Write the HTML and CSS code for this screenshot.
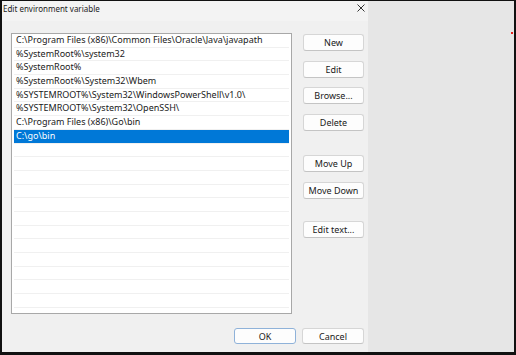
FILE: index.html
```html
<!DOCTYPE html>
<html lang="en">
<head>
    <meta charset="UTF-8">
    <title>Edit environment variable</title>
    <link rel="stylesheet" href="styles.css">
</head>
<body>
    <div class="screen">
        <div class="dialog">
            <div class="titlebar">
                <span class="title">Edit environment variable</span>
                <svg class="close" width="8" height="8" viewBox="0 0 8 8">
                    <path d="M0.5 0.5 L7.5 7.5 M7.5 0.5 L0.5 7.5" stroke="#333" stroke-width="1" fill="none"/>
                </svg>
            </div>

            <div class="body">
                <div class="list">
                    <div class="row">C:\Program Files (x86)\Common Files\Oracle\Java\javapath</div>
                    <div class="row">%SystemRoot%\system32</div>
                    <div class="row">%SystemRoot%</div>
                    <div class="row">%SystemRoot%\System32\Wbem</div>
                    <div class="row">%SYSTEMROOT%\System32\WindowsPowerShell\v1.0\</div>
                    <div class="row">%SYSTEMROOT%\System32\OpenSSH\</div>
                    <div class="row">C:\Program Files (x86)\Go\bin</div>
                    <div class="row selected">C:\go\bin</div>
                    <div class="row"></div>
                    <div class="row"></div>
                    <div class="row"></div>
                    <div class="row"></div>
                    <div class="row"></div>
                    <div class="row"></div>
                    <div class="row"></div>
                    <div class="row"></div>
                    <div class="row"></div>
                    <div class="row"></div>
                    <div class="row"></div>
                    <div class="row"></div>
                    <div class="row"></div>
                </div>

                <div class="actions">
                    <button>New</button>
                    <button>Edit</button>
                    <button>Browse...</button>
                    <button>Delete</button>
                    <button class="group-start">Move Up</button>
                    <button>Move Down</button>
                    <button class="group-end">Edit text...</button>
                </div>
            </div>

            <div class="footer">
                <button class="default">OK</button>
                <button>Cancel</button>
            </div>
        </div>

        <div class="backdrop">
            <span class="dot"></span>
        </div>
    </div>
</body>
</html>
```

FILE: styles.css
```css
body {
    margin: 0;
    background-color: #111;
    font-family: "Noto Sans", "Open Sans", sans-serif;
    font-size: 9px;
    color: #1a1a1a;
}
.screen {
    width: 516px;
    height: 355px;
    box-sizing: border-box;
    padding: 1px 2px 3px 2px;
    display: flex;
}
.dialog {
    width: 366px;
    background-color: #f0f0f0;
    display: flex;
    flex-direction: column;
}
.titlebar {
    height: 20px;
    display: flex;
    align-items: center;
    justify-content: space-between;
    padding: 0 3px 6px 1px;
    box-sizing: border-box;
    background-color: #f3f3f3;
}
.title {
    font-size: 8px;
    color: #222;
}
.close {
    display: block;
}
.body {
    display: flex;
    padding: 12px 0 0 9px;
}
.list {
    width: 281px;
    height: 281px;
    box-sizing: border-box;
    border: 1px solid #a8a8a8;
    background-color: #fff;
    padding: 0 2px;
    overflow: hidden;
}
.row {
    height: 13.7px;
    box-sizing: border-box;
    border-bottom: 1px solid #f0f0f0;
    padding-left: 2px;
    line-height: 12.7px;
    white-space: nowrap;
}
.row.selected {
    background-color: #0078d7;
    color: #fff;
}
.actions {
    display: flex;
    flex-direction: column;
    gap: 9.7px;
    margin-left: 11px;
    padding-top: 1px;
}
button {
    width: 61px;
    height: 17px;
    padding: 0;
    font-family: inherit;
    font-size: 9px;
    color: #1a1a1a;
    background-color: #fdfdfd;
    border: 1px solid #d6d6d6;
    border-bottom-color: #c4c4c4;
    border-radius: 3px;
}
.group-start {
    margin-top: 14.6px;
}
.group-end {
    margin-top: 12px;
}
.footer {
    display: flex;
    justify-content: flex-end;
    gap: 6px;
    margin-top: 14px;
    padding-right: 4px;
}
.footer button {
    width: 62px;
    height: 16px;
}
.footer .default {
    border-color: #8fb2d9;
}
.backdrop {
    flex: 1;
    background-color: #e6e6e6;
    position: relative;
}
.dot {
    position: absolute;
    top: 31px;
    right: 1px;
    width: 2px;
    height: 2px;
    background-color: #e8201c;
}
```
